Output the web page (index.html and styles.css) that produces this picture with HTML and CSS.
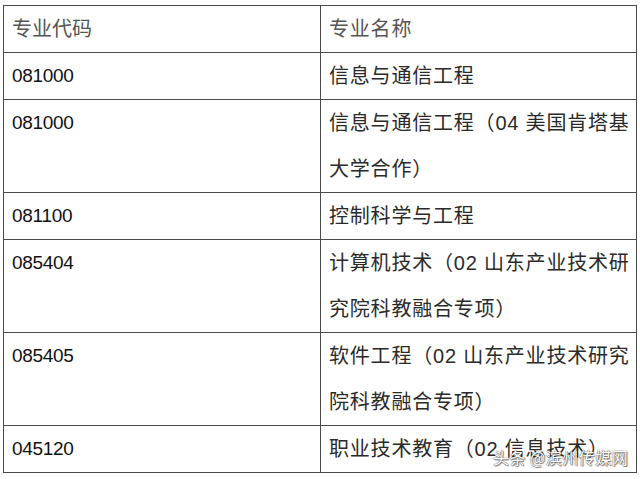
FILE: index.html
```html
<!DOCTYPE html>
<html lang="zh-CN">
<head>
<meta charset="utf-8">
<link rel="stylesheet" href="styles.css">
</head>
<body>
<div class="page">
  <table class="majors">
    <tr class="head">
      <td class="code">专业代码</td>
      <td class="name">专业名称</td>
    </tr>
    <tr>
      <td class="code num">081000</td>
      <td class="name">信息与通信工程</td>
    </tr>
    <tr>
      <td class="code num">081000</td>
      <td class="name">信息与通信工程（04 美国肯塔基<br>大学合作）</td>
    </tr>
    <tr>
      <td class="code num">081100</td>
      <td class="name">控制科学与工程</td>
    </tr>
    <tr>
      <td class="code num">085404</td>
      <td class="name">计算机技术（02 山东产业技术研<br>究院科教融合专项）</td>
    </tr>
    <tr>
      <td class="code num">085405</td>
      <td class="name">软件工程（02 山东产业技术研究<br>院科教融合专项）</td>
    </tr>
    <tr>
      <td class="code num">045120</td>
      <td class="name">职业技术教育（02 信息技术）</td>
    </tr>
  </table>
  <div class="watermark">头条 @滨州传媒网</div>
</div>
</body>
</html>
```
FILE: styles.css
```css
html, body {
  margin: 0;
  padding: 0;
  background: #ffffff;
}
.page {
  position: relative;
  width: 640px;
  height: 479px;
  overflow: hidden;
  padding: 5px 0 0 3px;
  box-sizing: border-box;
}
.majors {
  border-collapse: collapse;
  width: 634px;
  table-layout: fixed;
  font-family: "Liberation Sans", "Noto Sans CJK SC", sans-serif;
  font-size: 20px;
  color: #2a2a2a;
}
.majors td {
  border: 1.5px solid #4a4a4a;
  padding: 0 0 0 8px;
  line-height: 46px;
  vertical-align: top;
  white-space: nowrap;
}
.majors td.code {
  width: 317px;
  box-sizing: border-box;
}
.majors td.num {
  font-size: 19px;
  letter-spacing: -0.3px;
  color: #111111;
}
.majors td.name {
  letter-spacing: 0.8px;
}
.majors tr.head td {
  color: #555555;
}
.watermark {
  position: absolute;
  left: 493px;
  top: 446px;
  font-family: "Noto Sans CJK SC", sans-serif;
  font-size: 16px;
  line-height: 22px;
  color: #ffffff;
  text-shadow: 0 0 1px #555, 0 0 1px #555, 1px 1px 1px rgba(0,0,0,0.5);
  letter-spacing: 0.5px;
}
```
